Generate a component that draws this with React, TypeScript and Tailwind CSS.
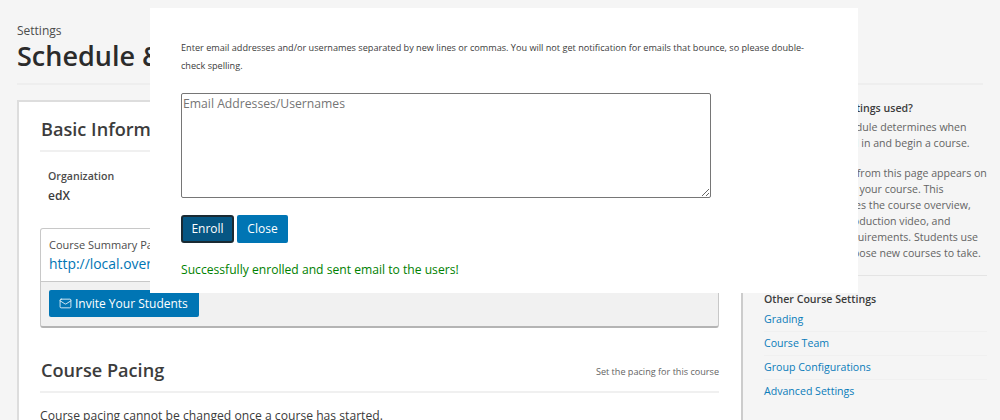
import { Mail } from "lucide-react";

const otherSettings = ["Grading", "Course Team", "Group Configurations", "Advanced Settings"];

export default function App() {
  return (
    <div className="relative h-[420px] overflow-hidden bg-[#f5f5f5] font-['Open_Sans',sans-serif] text-[#3c3c3c]">
      {/* Page behind the modal */}
      <div className="px-[17px] pt-[23px]">
        <header className="h-[62px] border-b-2 border-[#eeeeee] w-[966px]">
          <div className="text-[12px] leading-[16px] text-[#4c4c4c]">Settings</div>
          <h1 className="text-[27px] leading-[34px] font-semibold text-[#2b2b2b] whitespace-nowrap">
            Schedule &amp; Details
          </h1>
        </header>

        <div className="flex mt-[15px]">
          <main className="w-[726px] h-[340px] shrink-0 bg-white border-t-2 border-l-2 border-r-2 border-t-[#dddddd] border-l-[#dddddd] border-r-[#cccccc] pl-[21px] pr-[22px] pt-[13px]">
            <div className="h-[37px] border-b-2 border-[#f0f0f0] pl-[1px] text-[18.15px] leading-[28px] font-semibold text-[#3c3c3c]">
              Basic Information
            </div>
            <div className="pl-[8px] pt-[16px]">
              <div className="text-[10.6px] leading-[16px] font-semibold text-[#4c4c4c]">Organization</div>
              <div className="mt-[3px] text-[12px] leading-[18px] font-semibold text-[#3c3c3c]">edX</div>
            </div>

            <div className="mt-[23px] h-[100px] rounded-[3px] border border-[#c8c8c8] border-b-2 border-b-[#b4b4b4] bg-[#f1f1f1]">
              <div className="h-[53px] bg-white rounded-t-[3px] border-b border-[#c8c8c8] pl-[8px] pt-[8px]">
                <div className="text-[11px] leading-[15px] text-[#4c4c4c]">Course Summary Page</div>
                <div className="mt-[2px] text-[13.9px] leading-[20px] text-[#0075b4]">http://local.overhang.io</div>
              </div>
              <div className="pl-[8px] pt-[8px]">
                <button className="inline-flex items-center gap-[3px] h-[27px] w-[150px] pl-[10px] bg-[#0075b4] rounded-[2px] text-[12px] text-white">
                  <Mail className="w-[13px] h-[13px]" strokeWidth={1.5} />
                  Invite Your Students
                </button>
              </div>
            </div>

            <div className="mt-[25px] h-[40px] flex items-center justify-between border-b-2 border-[#f0f0f0] pb-[4px]">
              <span className="pl-[1px] text-[18.15px] leading-[28px] font-semibold text-[#3c3c3c]">Course Pacing</span>
              <span className="text-[9.1px] text-[#646464] pt-[4px]">Set the pacing for this course</span>
            </div>
            <p className="mt-[14px] text-[12.15px] leading-[18px] text-[#3c3c3c]">
              Course pacing cannot be changed once a course has started.
            </p>
          </main>

          <aside className="pl-[21px] w-[248px]">
            <h3 className="text-[10.6px] leading-[16px] font-semibold text-[#3c3c3c]">How are these settings used?</h3>
            <p className="mt-[3px] text-[10.6px] leading-[16px] text-[#646464] whitespace-nowrap">
              Your course's schedule determines when
              <br />
              students can enroll in and begin a course.
            </p>
            <p className="mt-[14px] text-[10.6px] leading-[16px] text-[#646464] whitespace-nowrap">
              Other information from this page appears on
              <br />
              the About page for your course. This
              <br />
              information includes the course overview,
              <br />
              course image, introduction video, and
              <br />
              estimated time requirements. Students use
              <br />
              About pages to choose new courses to take.
            </p>
            <div className="mt-[14px] border-t border-[#e4e4e4] pt-[15px]">
              <h3 className="text-[10.6px] leading-[16px] font-semibold text-[#3c3c3c]">Other Course Settings</h3>
              <nav className="mt-[1px] flex flex-col">
                {otherSettings.map((label) => (
                  <a
                    key={label}
                    className="h-[24px] border-b border-[#f0f0f0] text-[10.6px] leading-[22px] text-[#0a7cba] last:border-b-0"
                  >
                    {label}
                  </a>
                ))}
              </nav>
            </div>
          </aside>
        </div>
      </div>

      {/* Enroll modal */}
      <div className="absolute left-[150px] top-[8px] w-[708px] h-[285px] bg-white pl-[31px] pt-[31px]">
        <p className="w-[630px] text-[9.13px] leading-[18px] text-[#3c3c3c]">
          Enter email addresses and/or usernames separated by new lines or commas. You will not get notification for
          emails that bounce, so please double-check spelling.
        </p>
        <textarea
          readOnly
          placeholder="Email Addresses/Usernames"
          className="block mt-[18px] w-[530px] h-[105px] border border-[#767676] rounded-[2px] px-[1px] py-[1px] text-[12.2px] leading-[18px] placeholder:text-[#757575] outline-none"
        />
        <div className="flex gap-[3px] mt-[17px]">
          <button className="h-[28px] w-[53px] bg-[#065683] border-2 border-[#1a2a33] rounded-[3px] text-[12px] text-white">
            Enroll
          </button>
          <button className="h-[28px] w-[51px] bg-[#0075b4] rounded-[2px] text-[12px] text-white">Close</button>
        </div>
        <p className="mt-[18px] text-[12.13px] leading-[17px] text-[#008100]">
          Successfully enrolled and sent email to the users!
        </p>
      </div>
    </div>
  );
}
